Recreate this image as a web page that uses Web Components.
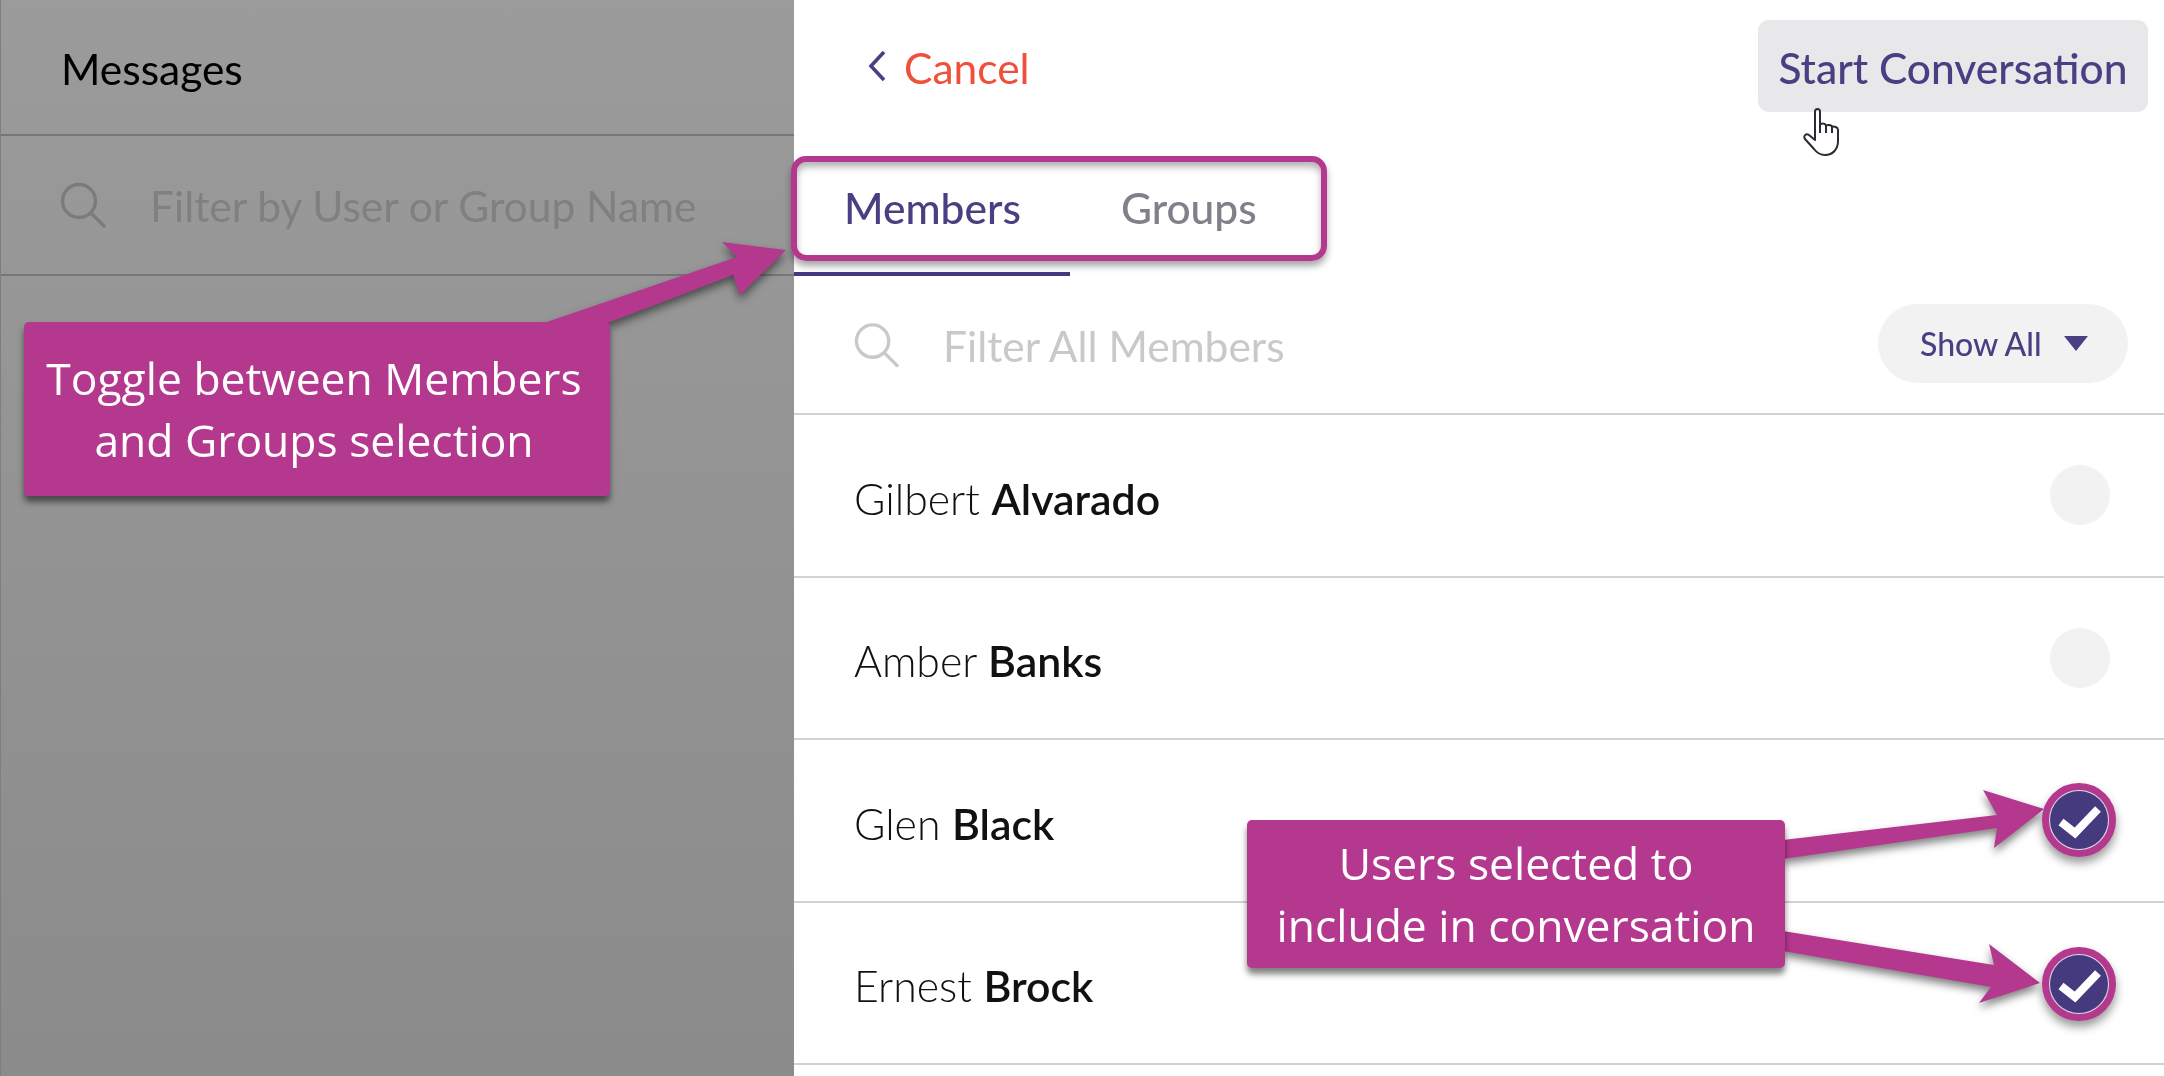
<!DOCTYPE html>
<html>
<head>
<meta charset="utf-8">
<title>Messages</title>
<style>
  html, body { margin: 0; height: 100%; }
  body { width: 2164px; height: 1076px; overflow: hidden; font-family: Lato, "Open Sans", sans-serif; background: #fff; }
</style>
</head>
<body>
<compose-screen>
  <messages-pane slot="left" heading="Messages" placeholder="Filter by User or Group Name"></messages-pane>
  <compose-pane slot="right">
    <member-row first="Gilbert" last="Alvarado"></member-row>
    <member-row first="Amber" last="Banks"></member-row>
    <member-row first="Glen" last="Black" selected></member-row>
    <member-row first="Ernest" last="Brock" selected></member-row>
  </compose-pane>
  <tab-highlight slot="overlay"></tab-highlight>
  <arrow-layer slot="overlay"></arrow-layer>
  <call-out slot="overlay" style="left:24px;top:322px;width:586px;height:174px;padding-right:6px">Toggle between Members<br>and Groups selection</call-out>
  <call-out slot="overlay" style="left:1247px;top:820px;width:538px;height:148px">Users selected to<br>include in conversation</call-out>
  <ring-mark slot="overlay" style="left:2042px;top:783px"></ring-mark>
  <ring-mark slot="overlay" style="left:2042px;top:947px"></ring-mark>
  <hand-cursor slot="overlay"></hand-cursor>
</compose-screen>

<script>
const SEARCH_ICON = `<svg viewBox="0 0 46 46" fill="none" stroke="currentColor" stroke-width="3.4"><circle cx="19" cy="19" r="16.5"/><path d="M31 31 44 44" stroke-linecap="round"/></svg>`;

class ComposeScreen extends HTMLElement {
  constructor() {
    super();
    this.attachShadow({mode: "open"}).innerHTML = `
    <style>
      :host { display: grid; grid-template-columns: 794px 1fr; width: 2164px; height: 1076px; position: relative; overflow: hidden; filter: blur(.5px); }
      .overlay { position: absolute; inset: 0; pointer-events: none; }
    </style>
    <slot name="left"></slot>
    <slot name="right"></slot>
    <div class="overlay"><slot name="overlay"></slot></div>`;
  }
}

class MessagesPane extends HTMLElement {
  constructor() {
    super();
    this.attachShadow({mode: "open"}).innerHTML = `
    <style>
      :host { display: flex; flex-direction: column; height: 1076px; box-sizing: border-box; border-left: 1px solid #7e7e7e;
        background: linear-gradient(180deg, #9b9b9b 0%, #8b8b8b 100%); }
      header { height: 136px; box-sizing: border-box; padding: 45px 0 0 60px; border-bottom: 2px solid #777; font-size: 42.5px; line-height: 48px; color: #000; }
      .filter { height: 140px; box-sizing: border-box; display: flex; align-items: center; gap: 44px; padding: 0 0 0 59px; border-bottom: 2px solid #777; color: #808080; font-size: 42.5px; }
      .filter svg { width: 46px; height: 46px; flex: none; color: #7b7b7b; }
    </style>
    <header></header>
    <div class="filter">${SEARCH_ICON}<span class="ph"></span></div>`;
    this.shadowRoot.querySelector("header").textContent = this.getAttribute("heading");
    this.shadowRoot.querySelector(".ph").textContent = this.getAttribute("placeholder");
  }
}

class ComposePane extends HTMLElement {
  constructor() {
    super();
    this.attachShadow({mode: "open"}).innerHTML = `
    <style>
      :host { display: flex; flex-direction: column; background: #fff; height: 1076px; }
      .top { display: flex; justify-content: space-between; align-items: flex-start; height: 156px; box-sizing: border-box; padding: 20px 16px 0 74px; }
      .cancel { display: flex; align-items: center; gap: 18px; height: 92px; color: #f0503a; font-size: 42.5px; }
      .cancel span { padding-top: 3px; }
      .cancel svg { width: 18px; height: 32px; }
      button { all: unset; box-sizing: border-box; width: 390px; height: 92px; border-radius: 11px; background: #e8e8ea; color: #4a3f82; font-size: 42.5px; text-align: center; line-height: 96px; font-weight: 500; }
      .tabs { display: flex; height: 120px; box-sizing: border-box; }
      .tab { width: 276px; box-sizing: border-box; padding: 28px 0 0 50px; font-size: 42.5px; font-weight: 500; line-height: 48px; color: #4a3f82; border-bottom: 4px solid #46397f; }
      .tab.off { width: auto; color: #80808a; border: none; padding-left: 51px; }
      .filter { height: 139px; box-sizing: border-box; display: flex; align-items: center; padding: 0 36px 0 60px; border-bottom: 2px solid #d2d2d2; }
      .filter svg { width: 45px; height: 46px; flex: none; color: #c9c9c9; margin-right: 44px; }
      .ph { flex: 1; color: #c9c9c9; font-size: 42.5px; padding-top: 2px; }
      .pill { display: flex; align-items: center; width: 250px; height: 79px; box-sizing: border-box; padding-left: 42px; border-radius: 40px; background: #f2f2f3; color: #4a3f82; font-size: 32px; font-weight: 500; margin-top: -2px; }
      .pill i { margin-left: 22px; width: 0; height: 0; border: 12px solid transparent; border-top: 15px solid #4a3f82; border-bottom: 0; }
    </style>
    <div class="top">
      <div class="cancel"><svg viewBox="0 0 18 32" fill="none" stroke="#4a3f82" stroke-width="3.6"><path d="M16 2 3 16 16 30"/></svg><span>Cancel</span></div>
      <button>Start Conversation</button>
    </div>
    <div class="tabs"><div class="tab">Members</div><div class="tab off">Groups</div></div>
    <div class="filter">${SEARCH_ICON}<span class="ph">Filter All Members</span><span class="pill">Show All<i></i></span></div>
    <slot></slot>`;
  }
}

class MemberRow extends HTMLElement {
  constructor() {
    super();
    this.attachShadow({mode: "open"}).innerHTML = `
    <style>
      :host { display: flex; align-items: center; justify-content: space-between; height: 162.5px; box-sizing: border-box; padding: 0 54px 0 60px; border-bottom: 2px solid #d2d2d2; font-size: 42.8px; color: #111; }
      .name { font-weight: 300; padding-top: 6px; }
      b { font-weight: 600; color: #111; }
      .dot { width: 60px; height: 60px; border-radius: 50%; background: #f2f2f2; }
      :host([selected]) .dot { background: #463a7e; }
    </style>
    <span class="name"></span><span class="dot"></span>`;
    let name = this.shadowRoot.querySelector(".name");
    name.textContent = this.getAttribute("first") + " ";
    let last = document.createElement("b");
    last.textContent = this.getAttribute("last");
    name.append(last);
  }
}

class TabHighlight extends HTMLElement {
  constructor() {
    super();
    this.attachShadow({mode: "open"}).innerHTML = `
    <style>
      :host { position: absolute; left: 791px; top: 156px; width: 536px; height: 105px; box-sizing: border-box; border: 6px solid #b5388f; border-radius: 15px;
        box-shadow: 0 5px 7px rgba(0,0,0,.35), inset 0 5px 7px rgba(0,0,0,.3); }
    </style>`;
  }
}

class ArrowLayer extends HTMLElement {
  constructor() {
    super();
    this.attachShadow({mode: "open"}).innerHTML = `
    <style>
      :host { position: absolute; inset: 0; }
      svg { width: 2164px; height: 1076px; display: block; }
      polygon { fill: #b5388f; filter: drop-shadow(0 5px 4px rgba(0,0,0,.5)); }
    </style>
    <svg viewBox="0 0 2164 1076">
      <polygon points="541,324 737,257 722,242 786,250 740,295 733,275 605,324"/>
      <polygon points="1783,840 1997,815 1983,790 2044,809 1994,848 1997,828 1783,859"/>
      <polygon points="1783,931 1994,965 1989,944 2040,983 1979,1003 1991,987 1783,951"/>
    </svg>`;
  }
}

class CallOut extends HTMLElement {
  constructor() {
    super();
    this.attachShadow({mode: "open"}).innerHTML = `
    <style>
      :host { position: absolute; display: flex; align-items: center; justify-content: center; text-align: center; box-sizing: border-box; background: #b5388f; color: #fff; border-radius: 5px;
        font-family: "Open Sans", sans-serif; font-weight: 400; font-size: 44.4px; line-height: 62px; box-shadow: 0 6px 6px rgba(0,0,0,.5); }
    </style>
    <div><slot></slot></div>`;
  }
}

class RingMark extends HTMLElement {
  constructor() {
    super();
    this.attachShadow({mode: "open"}).innerHTML = `
    <style>
      :host { position: absolute; width: 74px; height: 74px; display: block; filter: drop-shadow(0 6px 5px rgba(0,0,0,.4)); }
      svg { width: 74px; height: 74px; display: block; }
    </style>
    <svg viewBox="0 0 74 74">
      <circle cx="37" cy="37" r="33.5" fill="#d9d9e2" stroke="#b5388f" stroke-width="7"/>
      <circle cx="37" cy="37" r="29" fill="#463a7e"/>
      <path d="M19 39 33 50 56 26" fill="none" stroke="#fff" stroke-width="8"/>
    </svg>`;
  }
}

class HandCursor extends HTMLElement {
  constructor() {
    super();
    this.attachShadow({mode: "open"}).innerHTML = `
    <style>
      :host { position: absolute; left: 1803px; top: 108px; width: 36px; height: 48px; display: block; }
      svg { width: 36px; height: 48px; display: block; }
    </style>
    <svg viewBox="0 0 36 48" fill="#fff" stroke="#2b2b33" stroke-width="2" stroke-linejoin="round">
      <path d="M12 4c0-4 5-4 5 0v13c1-2 6-2 6 1 1-2 6-1 6 1 2-1 6 0 6 3v11c0 8-5 14-13 14-5 0-8-2-11-6L2 31c-2-3 1-6 4-4l6 5z"/>
      <path d="M17 17v8M23 18v7M29 19v6" fill="none"/>
    </svg>`;
  }
}

customElements.define("compose-screen", ComposeScreen);
customElements.define("messages-pane", MessagesPane);
customElements.define("compose-pane", ComposePane);
customElements.define("member-row", MemberRow);
customElements.define("tab-highlight", TabHighlight);
customElements.define("arrow-layer", ArrowLayer);
customElements.define("call-out", CallOut);
customElements.define("ring-mark", RingMark);
customElements.define("hand-cursor", HandCursor);
</script>
</body>
</html>
